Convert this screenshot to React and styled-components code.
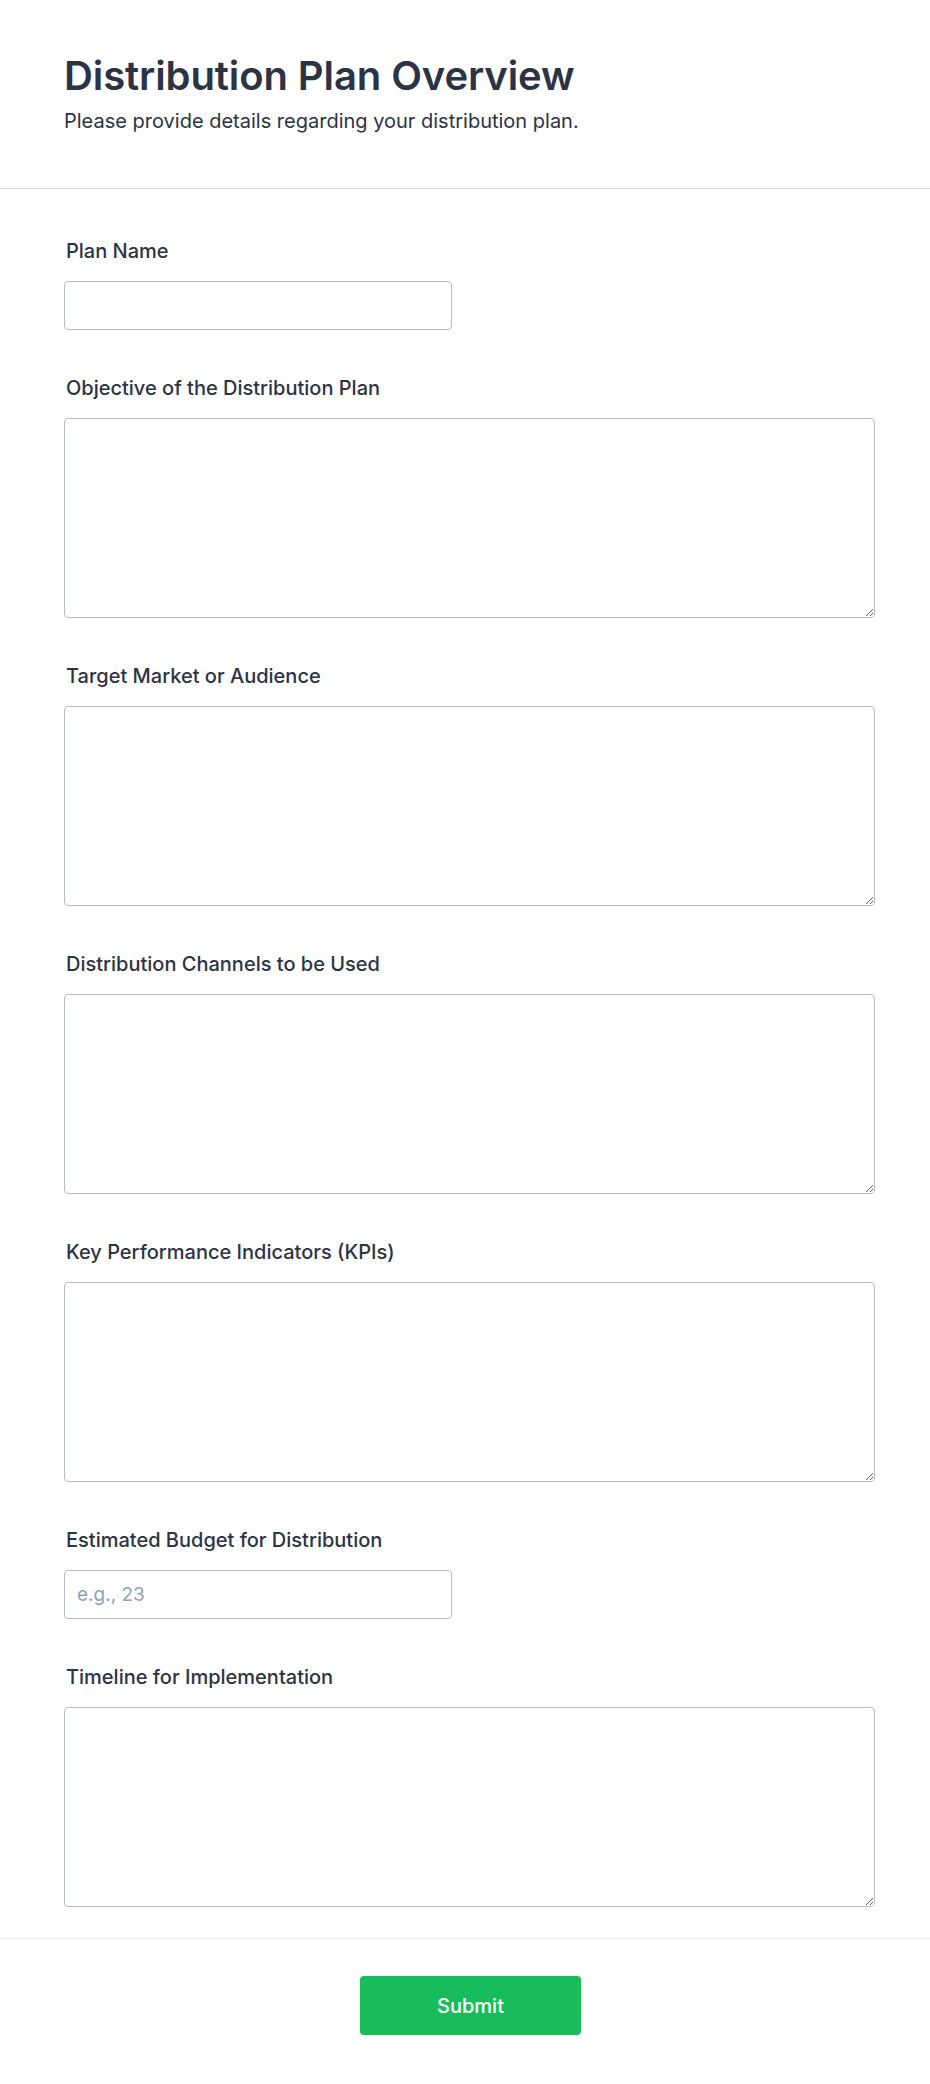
import React from "react";
import styled, { createGlobalStyle } from "styled-components";

const GlobalStyle = createGlobalStyle`
  * {
    box-sizing: border-box;
  }
  body {
    margin: 0;
    background: #ffffff;
    font-family: Inter, "Noto Sans", Arial, sans-serif;
    color: #2c3345;
  }
`;

const Page = styled.div`
  width: 100%;
  min-height: 2084px;
  background: #fff;
`;

const Header = styled.header`
  height: 189px;
  padding: 52px 64px 0;
  border-bottom: 1px solid #d8dae5;
`;

const Title = styled.h1`
  margin: 0;
  font-size: 40px;
  line-height: 48px;
  font-weight: 600;
  letter-spacing: -0.1px;
  color: #2c3345;
`;

const Subtitle = styled.p`
  margin: 6px 0 0;
  font-size: 20px;
  line-height: 30px;
  font-weight: 400;
  color: #2c3345;
`;

const Form = styled.form`
  display: flex;
  flex-direction: column;
  gap: 46px;
  padding: 50px 55px 31px 64px;
`;

const Field = styled.div`
  display: flex;
  flex-direction: column;
  gap: 18px;
`;

const Label = styled.label`
  padding-left: 2px;
  font-size: 20px;
  line-height: 24px;
  font-weight: 500;
  color: #2c3345;
`;

const TextInput = styled.input`
  width: 388px;
  height: 49px;
  padding: 0 12px;
  border: 1px solid #b8bdc9;
  border-radius: 4px;
  font-family: inherit;
  font-size: 19px;
  color: #2c3345;
  background: #fff;
  outline: none;

  &::placeholder {
    color: #8da1bb;
  }
`;

const TextArea = styled.textarea`
  display: block;
  width: 100%;
  height: 200px;
  padding: 10px 12px;
  border: 1px solid #b8bdc9;
  border-radius: 4px;
  font-family: inherit;
  font-size: 19px;
  color: #2c3345;
  background: #fff;
  outline: none;
`;

const Footer = styled.footer`
  display: flex;
  justify-content: center;
  padding: 37px 0 50px 11px;
  border-top: 1px solid #e7e9f0;
`;

const SubmitButton = styled.button`
  width: 221px;
  height: 59px;
  border: none;
  border-radius: 4px;
  background: #18bd5b;
  color: #fff;
  font-family: inherit;
  font-size: 20px;
  font-weight: 500;
  cursor: pointer;
`;

const fields = [
  { id: "planName", label: "Plan Name", type: "input" },
  { id: "objective", label: "Objective of the Distribution Plan", type: "textarea" },
  { id: "target", label: "Target Market or Audience", type: "textarea" },
  { id: "channels", label: "Distribution Channels to be Used", type: "textarea" },
  { id: "kpis", label: "Key Performance Indicators (KPIs)", type: "textarea" },
  { id: "budget", label: "Estimated Budget for Distribution", type: "input", placeholder: "e.g., 23" },
  { id: "timeline", label: "Timeline for Implementation", type: "textarea" },
];

const App = () => {
  return (
    <>
      <GlobalStyle />
      <Page>
        <Header>
          <Title>Distribution Plan Overview</Title>
          <Subtitle>Please provide details regarding your distribution plan.</Subtitle>
        </Header>
        <Form onSubmit={(e) => e.preventDefault()}>
          {fields.map((field) => (
            <Field key={field.id}>
              <Label htmlFor={field.id}>{field.label}</Label>
              {field.type === "input" ? (
                <TextInput id={field.id} type="text" placeholder={field.placeholder} />
              ) : (
                <TextArea id={field.id} />
              )}
            </Field>
          ))}
        </Form>
        <Footer>
          <SubmitButton type="button">Submit</SubmitButton>
        </Footer>
      </Page>
    </>
  );
};

export default App;
